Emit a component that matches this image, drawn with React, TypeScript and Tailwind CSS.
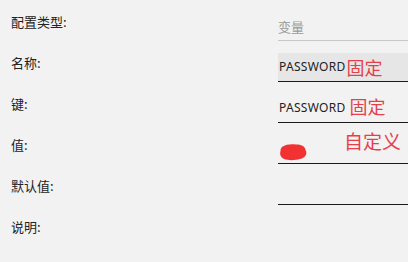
import React from "react";

const cjk = { fontFamily: '"Noto Sans CJK SC", "Noto Sans", sans-serif' };
const latin = { fontFamily: '"Noto Sans", "Noto Sans CJK SC", sans-serif' };

function Row({ label, children }: { label: string; children?: React.ReactNode }) {
  return (
    <div className="flex h-[41px]">
      <div
        className="w-[278px] shrink-0 pl-[11px] pt-[13px] text-[13px] leading-[18px] text-[#222]"
        style={cjk}
      >
        {label}
      </div>
      <div className="min-w-0 flex-1">{children}</div>
    </div>
  );
}

function Blob() {
  return (
    <svg width="29" height="18" viewBox="0 0 29 18" className="block">
      <path
        d="M3 4 C7 1 13 1 17 1.5 C22 1.5 26 3 26.5 7 C28.5 10 27 15 21 16 C16 17.5 9 17.5 5 16 C1.5 14.5 0.5 11 1.5 8 C1.5 6 2 5 3 4 Z"
        fill="#f23232"
      />
    </svg>
  );
}

export default function App() {
  return (
    <div className="h-[262px] w-[408px] overflow-hidden bg-[#f2f2f2]">
      <Row label="配置类型:">
        <div className="mt-[12px] flex h-[29px] items-center border-b border-[#c8c8c8] pt-[2px]">
          <span className="text-[13px] text-[#9a9a9a]" style={cjk}>
            变量
          </span>
        </div>
      </Row>
      <Row label="名称:">
        <div className="mt-[12px] flex h-[29px] items-center border-b border-[#1a1a1a] bg-[#e6e6e6]">
          <span className="pl-px text-[12px] tracking-[0.3px] text-[#222]" style={latin}>
            PASSWORD
          </span>
          <span className="ml-[1px] text-[18px] leading-none text-[#e5404a]" style={cjk}>
            固定
          </span>
        </div>
      </Row>
      <Row label="键:">
        <div className="mt-[12px] flex h-[29px] items-center border-b border-[#1a1a1a]">
          <span className="pl-px text-[12px] tracking-[0.3px] text-[#222]" style={latin}>
            PASSWORD
          </span>
          <span className="ml-[4px] -translate-y-[2px] text-[18px] leading-none text-[#e5404a]" style={cjk}>
            固定
          </span>
        </div>
      </Row>
      <Row label="值:">
        <div className="mt-[12px] flex h-[29px] items-center border-b border-[#1a1a1a]">
          <div className="pl-px pt-[5px]">
            <Blob />
          </div>
          <span className="ml-[36px] -translate-y-[9px] text-[19px] leading-none text-[#e5404a]" style={cjk}>
            自定义
          </span>
        </div>
      </Row>
      <Row label="默认值:">
        <div className="mt-[12px] h-[29px] border-b border-[#1a1a1a]" />
      </Row>
      <Row label="说明:" />
    </div>
  );
}
